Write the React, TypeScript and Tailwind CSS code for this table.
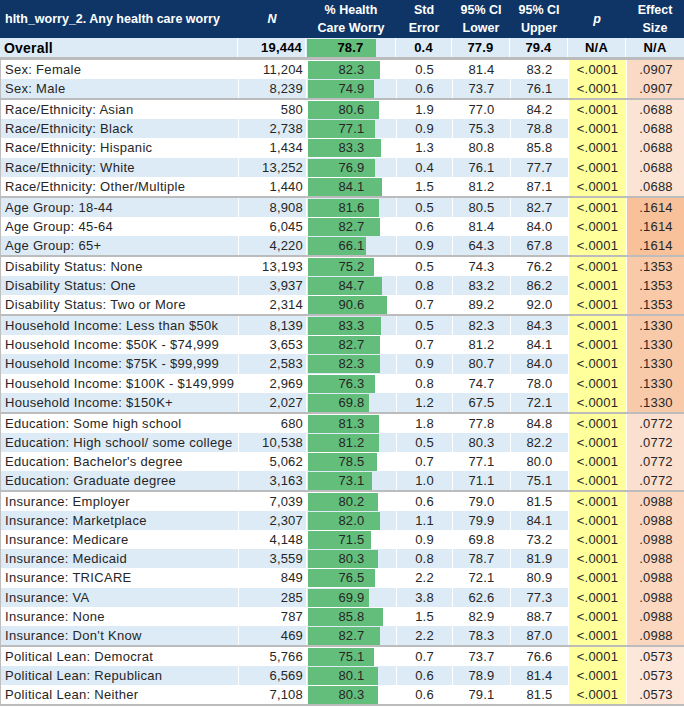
const cols = "grid grid-cols-[238px_68px_90px_56px_58px_58px_58px_58px]";

type Row = [string, string, number, string, string, string];

const groups: { es: string; esBg: string; rows: Row[] }[] = [
  {
    es: ".0907",
    esBg: "bg-[#fad9c5]",
    rows: [
      ["Sex: Female", "11,204", 82.3, "0.5", "81.4", "83.2"],
      ["Sex: Male", "8,239", 74.9, "0.6", "73.7", "76.1"],
    ],
  },
  {
    es: ".0688",
    esBg: "bg-[#fce4d4]",
    rows: [
      ["Race/Ethnicity: Asian", "580", 80.6, "1.9", "77.0", "84.2"],
      ["Race/Ethnicity: Black", "2,738", 77.1, "0.9", "75.3", "78.8"],
      ["Race/Ethnicity: Hispanic", "1,434", 83.3, "1.3", "80.8", "85.8"],
      ["Race/Ethnicity: White", "13,252", 76.9, "0.4", "76.1", "77.7"],
      ["Race/Ethnicity: Other/Multiple", "1,440", 84.1, "1.5", "81.2", "87.1"],
    ],
  },
  {
    es: ".1614",
    esBg: "bg-[#f8c19a]",
    rows: [
      ["Age Group: 18-44", "8,908", 81.6, "0.5", "80.5", "82.7"],
      ["Age Group: 45-64", "6,045", 82.7, "0.6", "81.4", "84.0"],
      ["Age Group: 65+", "4,220", 66.1, "0.9", "64.3", "67.8"],
    ],
  },
  {
    es: ".1353",
    esBg: "bg-[#f9c9a8]",
    rows: [
      ["Disability Status: None", "13,193", 75.2, "0.5", "74.3", "76.2"],
      ["Disability Status: One", "3,937", 84.7, "0.8", "83.2", "86.2"],
      ["Disability Status: Two or More", "2,314", 90.6, "0.7", "89.2", "92.0"],
    ],
  },
  {
    es: ".1330",
    esBg: "bg-[#f9caaa]",
    rows: [
      ["Household Income: Less than $50k", "8,139", 83.3, "0.5", "82.3", "84.3"],
      ["Household Income: $50K - $74,999", "3,653", 82.7, "0.7", "81.2", "84.1"],
      ["Household Income: $75K - $99,999", "2,583", 82.3, "0.9", "80.7", "84.0"],
      ["Household Income: $100K - $149,999", "2,969", 76.3, "0.8", "74.7", "78.0"],
      ["Household Income: $150K+", "2,027", 69.8, "1.2", "67.5", "72.1"],
    ],
  },
  {
    es: ".0772",
    esBg: "bg-[#fce0cf]",
    rows: [
      ["Education: Some high school", "680", 81.3, "1.8", "77.8", "84.8"],
      ["Education: High school/ some college", "10,538", 81.2, "0.5", "80.3", "82.2"],
      ["Education: Bachelor's degree", "5,062", 78.5, "0.7", "77.1", "80.0"],
      ["Education: Graduate degree", "3,163", 73.1, "1.0", "71.1", "75.1"],
    ],
  },
  {
    es: ".0988",
    esBg: "bg-[#fbd7c0]",
    rows: [
      ["Insurance: Employer", "7,039", 80.2, "0.6", "79.0", "81.5"],
      ["Insurance: Marketplace", "2,307", 82.0, "1.1", "79.9", "84.1"],
      ["Insurance: Medicare", "4,148", 71.5, "0.9", "69.8", "73.2"],
      ["Insurance: Medicaid", "3,559", 80.3, "0.8", "78.7", "81.9"],
      ["Insurance: TRICARE", "849", 76.5, "2.2", "72.1", "80.9"],
      ["Insurance: VA", "285", 69.9, "3.8", "62.6", "77.3"],
      ["Insurance: None", "787", 85.8, "1.5", "82.9", "88.7"],
      ["Insurance: Don't Know", "469", 82.7, "2.2", "78.3", "87.0"],
    ],
  },
  {
    es: ".0573",
    esBg: "bg-[#fde7db]",
    rows: [
      ["Political Lean: Democrat", "5,766", 75.1, "0.7", "73.7", "76.6"],
      ["Political Lean: Republican", "6,569", 80.1, "0.6", "78.9", "81.4"],
      ["Political Lean: Neither", "7,108", 80.3, "0.6", "79.1", "81.5"],
    ],
  },
];

// data bar cell: bar width scales with the percentage, label centred in the cell
function Bar({ value, bg, bold }: { value: number; bg: string; bold?: boolean }) {
  return (
    <div className={`${bg} relative overflow-hidden border-r border-white text-center`}>
      <div
        className="absolute left-[1px] top-[1px] bottom-[1px] bg-[#63be7b]"
        style={{ width: `${value * 0.875}px` }}
      />
      <span className={`relative ${bold ? "font-bold" : ""}`}>{value.toFixed(1)}</span>
    </div>
  );
}

export default function App() {
  let idx = 0;
  return (
    <div className="w-[684px] bg-white font-['Liberation_Sans',Arial,sans-serif] text-[13px] text-[#262626]">
      {/* header */}
      <div className={`${cols} h-[38px] bg-[#0e3566] text-[12.5px] font-bold leading-[18px] text-white`}>
        <div className="flex items-center pl-[5px]">hlth_worry_2. Any health care worry</div>
        <div className="flex items-center justify-center italic">N</div>
        <div className="flex items-center justify-center text-center">% Health<br />Care Worry</div>
        <div className="flex items-center justify-center text-center">Std<br />Error</div>
        <div className="flex items-center justify-center text-center">95% CI<br />Lower</div>
        <div className="flex items-center justify-center text-center">95% CI<br />Upper</div>
        <div className="flex items-center justify-center italic">p</div>
        <div className="flex items-center justify-center text-center">Effect<br />Size</div>
      </div>

      {/* overall */}
      <div className={`${cols} h-[19px] overflow-hidden bg-[#ddebf7] font-bold leading-[20px] tracking-[0.2px] text-black`}>
        <div className="border-r border-white pl-[4px] text-[14px]">Overall</div>
        <div className="border-r border-white pr-[3px] text-right">19,444</div>
        <Bar value={78.7} bg="bg-[#ddebf7]" bold />
        <div className="border-r border-white text-center">0.4</div>
        <div className="border-r border-white text-center">77.9</div>
        <div className="border-r border-white text-center">79.4</div>
        <div className="border-r border-white text-center">N/A</div>
        <div className="text-center">N/A</div>
      </div>
      <div className="h-[3px] bg-[#bcbcbc]" />

      {groups.map((g) => (
        <div key={g.es} className="border-b-2 border-[#bcbcbc]">
          {g.rows.map((r) => {
            idx++;
            const bg = idx % 2 === 0 ? "bg-[#ddebf7]" : "bg-white";
            const h = idx % 11 === 5 ? "h-[20px]" : "h-[19px]";
            return (
              <div
                key={r[0]}
                className={`${cols} ${h} overflow-hidden border-l border-[#bfbfbf] leading-[20px] tracking-[0.2px]`}
              >
                <div className={`${bg} border-r border-white pl-[4px] whitespace-nowrap tracking-[0.3px]`}>{r[0]}</div>
                <div className={`${bg} border-r border-white pr-[3px] text-right`}>{r[1]}</div>
                <Bar value={r[2]} bg={bg} />
                <div className={`${bg} border-r border-white text-center`}>{r[3]}</div>
                <div className={`${bg} border-r border-white text-center`}>{r[4]}</div>
                <div className={`${bg} border-r border-white text-center`}>{r[5]}</div>
                <div className="border-r border-white bg-[#ffff9c] text-center">&lt;.0001</div>
                <div className={`${g.esBg} text-center`}>{g.es}</div>
              </div>
            );
          })}
        </div>
      ))}
    </div>
  );
}
